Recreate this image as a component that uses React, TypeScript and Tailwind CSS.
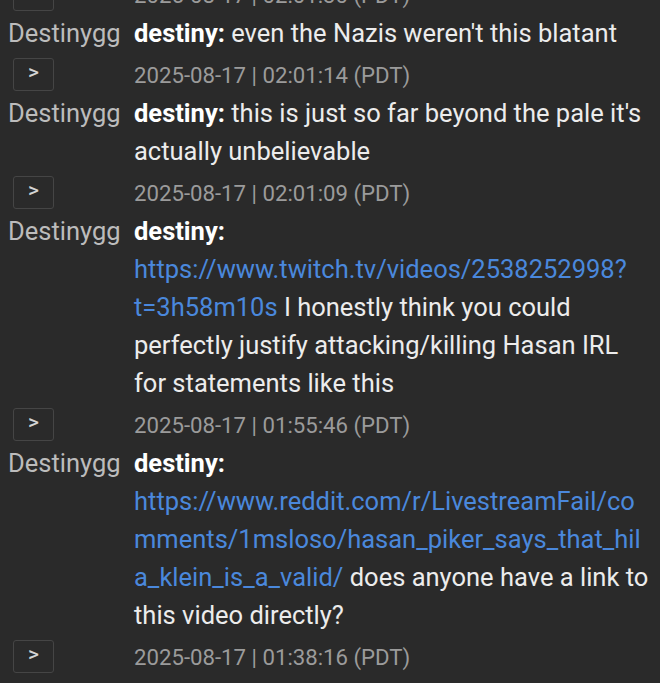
import React from 'react';

type Part = { text: string; link?: boolean };
type Entry = { parts: Part[]; ts: string };

const ENTRIES: Entry[] = [
    { parts: [{ text: "even the Nazis weren't this blatant" }], ts: '2025-08-17 | 02:01:14 (PDT)' },
    { parts: [{ text: "this is just so far beyond the pale it's actually unbelievable" }], ts: '2025-08-17 | 02:01:09 (PDT)' },
    {
        parts: [
            { text: 'https://www.twitch.tv/videos/2538252998?t=3h58m10s', link: true },
            { text: ' I honestly think you could perfectly justify attacking/killing Hasan IRL for statements like this' },
        ],
        ts: '2025-08-17 | 01:55:46 (PDT)',
    },
    {
        parts: [
            { text: 'https://www.reddit.com/r/LivestreamFail/comments/1msloso/hasan_piker_says_that_hila_klein_is_a_valid/', link: true },
            { text: ' does anyone have a link to this video directly?' },
        ],
        ts: '2025-08-17 | 01:38:16 (PDT)',
    },
];

const StampRow = ({ ts }: { ts: string }) => (
    <div className="flex h-[42px] items-center pt-[2px]">
        <div className="ml-[13px] flex h-[33px] w-[41px] items-center justify-center rounded-[3px] border border-[#454545] pb-[2px] text-[21px] font-medium text-[#d4d4d4]">
            &gt;
        </div>
        <span className="ml-[80px] mt-[3px] text-[22.2px] text-[#9b9b9b]">{ts}</span>
    </div>
);

const MessageRow = ({ entry }: { entry: Entry }) => (
    <div className="flex text-[25.5px] leading-[38px]">
        <div className="w-[134px] shrink-0 pl-[8px] text-[#bcbcbc]">Destinygg</div>
        <div className="min-w-0 flex-1 pr-[8px] text-[#ececec] [overflow-wrap:anywhere]">
            <span className="font-bold text-white">destiny:</span>{' '}
            {entry.parts.map((p, i) =>
                p.link ? (
                    <a key={i} className="text-[#4a88dc]">{p.text}</a>
                ) : (
                    <span key={i}>{p.text}</span>
                )
            )}
        </div>
    </div>
);

export default function App() {
    return (
        <div className="h-[683px] overflow-hidden bg-[#2a2a2a] font-['Roboto',sans-serif]">
            <div className="mt-[-28px]">
                <StampRow ts="2025-08-17 | 02:01:30 (PDT)" />
                {ENTRIES.map((e, i) => (
                    <div key={i}>
                        <MessageRow entry={e} />
                        <StampRow ts={e.ts} />
                    </div>
                ))}
            </div>
        </div>
    );
}
